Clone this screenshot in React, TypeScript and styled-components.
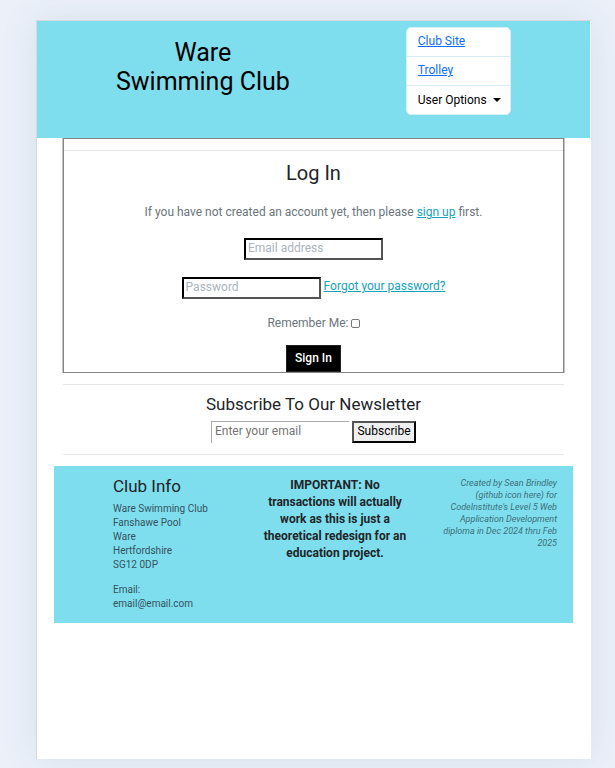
import React from "react";
import styled, { createGlobalStyle } from "styled-components";

const GlobalStyle = createGlobalStyle`
  *, *::before, *::after { box-sizing: border-box; }
  body {
    margin: 0;
    background: #ebf0f9;
    color: #212529;
    font-family: Roboto, "Liberation Sans", sans-serif;
    font-size: 12px;
    line-height: 18px;
  }
  h1, h2, h3, p { margin: 0; font-weight: 400; }
  input, button { font-family: inherit; }
`;

const Backdrop = styled.div`
  display: flex;
  min-height: 100vh;
  padding: 20px 24px 9px 36px;
`;

const Sheet = styled.div`
  flex: 1;
  min-width: 0;
  padding-right: 1px;
  background: #fff;
  border: solid #d6d9dd;
  border-width: 1px 0 0 1px;
  box-shadow: 0 0 36px rgba(70, 100, 120, 0.1);
`;

const Header = styled.header`
  display: grid;
  grid-template-columns: 3fr 2fr;
  align-items: start;
  min-height: 117px;
  padding: 6px 0;
  background: #7edeed;
`;

const ClubName = styled.h1`
  padding-top: 11px;
  color: #000;
  font-size: 25px;
  line-height: 29px;
  text-align: center;
`;

const Menu = styled.ul`
  justify-self: start;
  width: 105px;
  margin: 0 0 0 37px;
  padding: 0;
  list-style: none;
  background: #fff;
  border: 1px solid #d6f1f6;
  border-radius: 5px;
`;

const MenuItem = styled.li`
  display: flex;
  height: 29px;
  padding: 4px 11px;
  &:first-child { height: 28px; }
  & + & { border-top: 1px solid #d6eff4; }
`;

const MenuLink = styled.a`
  color: #0d6efd;
  text-decoration: underline;
`;

const MenuButton = styled.button`
  display: flex;
  align-items: center;
  gap: 6px;
  padding: 0;
  border: 0;
  background: none;
  color: #000;
  font-size: 12px;
  line-height: 18px;
  white-space: nowrap;
`;

const Caret = styled.span`
  border: 4px solid transparent;
  border-top-color: currentColor;
  border-bottom: 0;
`;

const Main = styled.main`
  padding: 0 26px;
`;

const LoginBox = styled.section`
  display: flex;
  flex-direction: column;
  align-items: center;
  border: 1px solid #858585;
  box-shadow: 1px 0 #c4c4c4, -1px 0 #c4c4c4;
  color: #6c757d;
`;

const Rule = styled.hr`
  align-self: stretch;
  height: 1px;
  margin: 11px 0;
  border: 0;
  background: #e5e6e8;
`;

const LoginForm = styled.form`
  display: flex;
  flex-direction: column;
  align-items: center;
`;

const LoginTitle = styled.h2`
  color: #212529;
  font-size: 20px;
  line-height: 22px;
`;

const Hint = styled.p`
  margin: 19px 0 17px;
`;

const TealLink = styled.a`
  color: #17a2b8;
  text-decoration: underline;
`;

const FieldRow = styled.div`
  display: flex;
  align-items: flex-start;
  gap: 3px;
  margin-bottom: 17px;
`;

const Field = styled.input`
  width: 139px;
  height: 22px;
  padding: 0 2px 2px;
  border: 2px inset #000;
  border-radius: 0;
  background: #fff;
  color: #212529;
  font-size: 12px;
  &::placeholder { color: #aab4be; opacity: 1; }
`;

const RememberLabel = styled.label`
  display: flex;
  align-items: center;
  gap: 2px;
  margin: -2px 0 13px;
`;

const Tick = styled.input`
  appearance: none;
  width: 9px;
  height: 9px;
  margin: 0;
  border: 1px solid #767676;
  border-radius: 2px;
  background: #fff;
  &:checked { background: #17a2b8; }
`;

const SignIn = styled.button`
  width: 55px;
  height: 27px;
  padding: 0 0 2px;
  border: 1px solid #222;
  background: #000;
  color: #fff;
  font-size: 12px;
  font-weight: 500;
`;

const Newsletter = styled.form`
  display: flex;
  flex-direction: column;
  align-items: center;
`;

const NewsletterTitle = styled.h3`
  margin-bottom: 9px;
  font-size: 17px;
  line-height: 16px;
`;

const NewsletterRow = styled.div`
  display: flex;
  gap: 3px;
`;

const NewsletterField = styled(Field)`
  width: 138px;
  padding: 0 3px 3px;
  border: solid #aaa;
  border-width: 1px 0 0 1px;
  &::placeholder { color: #757575; }
`;

const SubscribeButton = styled.button`
  width: 64px;
  height: 22px;
  padding: 0 0 2px;
  border: 2px outset #000;
  background: #efefef;
  color: #000;
  font-size: 12px;
`;

const Footer = styled.footer`
  display: grid;
  grid-template-columns: 130fr 152fr 130fr;
  column-gap: 16px;
  align-items: start;
  min-height: 157px;
  margin: 0 17px;
  padding: 11px 16px 11px 59px;
  background: #7edeed;
`;

const FooterTitle = styled.h3`
  margin-bottom: 7px;
  font-size: 17px;
  line-height: 18px;
`;

const Address = styled.address`
  color: #34525e;
  font-size: 10px;
  font-style: normal;
  line-height: 14px;
  & + & { margin-top: 11px; }
`;

const Notice = styled.p`
  font-weight: 700;
  line-height: 17px;
  text-align: center;
`;

const Credit = styled.p`
  padding-left: 14px;
  color: #3d6f7b;
  font-size: 9px;
  font-style: italic;
  line-height: 12px;
  text-align: right;
`;

export default function App() {
  return (
    <>
      <GlobalStyle />
      <Backdrop>
        <Sheet>
          <Header>
            <ClubName>Ware<br />Swimming Club</ClubName>
            <Menu>
              <MenuItem><MenuLink href="#club">Club Site</MenuLink></MenuItem>
              <MenuItem><MenuLink href="#trolley">Trolley</MenuLink></MenuItem>
              <MenuItem>
                <MenuButton type="button" aria-haspopup="menu">User Options<Caret /></MenuButton>
              </MenuItem>
            </Menu>
          </Header>
          <Main>
            <LoginBox>
              <Rule />
              <LoginForm onSubmit={(e) => e.preventDefault()}>
                <LoginTitle>Log In</LoginTitle>
                <Hint>
                  If you have not created an account yet, then please{" "}
                  <TealLink href="#signup">sign up</TealLink> first.
                </Hint>
                <FieldRow>
                  <Field type="email" aria-label="Email address" placeholder="Email address" />
                </FieldRow>
                <FieldRow>
                  <Field type="password" aria-label="Password" placeholder="Password" />
                  <TealLink href="#reset">Forgot your password?</TealLink>
                </FieldRow>
                <RememberLabel>Remember Me:<Tick type="checkbox" /></RememberLabel>
                <SignIn type="submit">Sign In</SignIn>
              </LoginForm>
            </LoginBox>
            <Rule />
            <Newsletter onSubmit={(e) => e.preventDefault()}>
              <NewsletterTitle>Subscribe To Our Newsletter</NewsletterTitle>
              <NewsletterRow>
                <NewsletterField type="email" aria-label="Enter your email" placeholder="Enter your email" />
                <SubscribeButton type="submit">Subscribe</SubscribeButton>
              </NewsletterRow>
            </Newsletter>
            <Rule />
          </Main>
          <Footer>
            <div>
              <FooterTitle>Club Info</FooterTitle>
              <Address>
                Ware Swimming Club<br />Fanshawe Pool<br />Ware<br />Hertfordshire<br />SG12 0DP
              </Address>
              <Address>Email:<br />email@email.com</Address>
            </div>
            <Notice>
              IMPORTANT: No transactions will actually work as this is just a theoretical redesign for an education project.
            </Notice>
            <Credit>
              Created by Sean Brindley (github icon here) for CodeInstitute's Level 5 Web Application Development diploma in Dec 2024 thru Feb 2025
            </Credit>
          </Footer>
        </Sheet>
      </Backdrop>
    </>
  );
}
